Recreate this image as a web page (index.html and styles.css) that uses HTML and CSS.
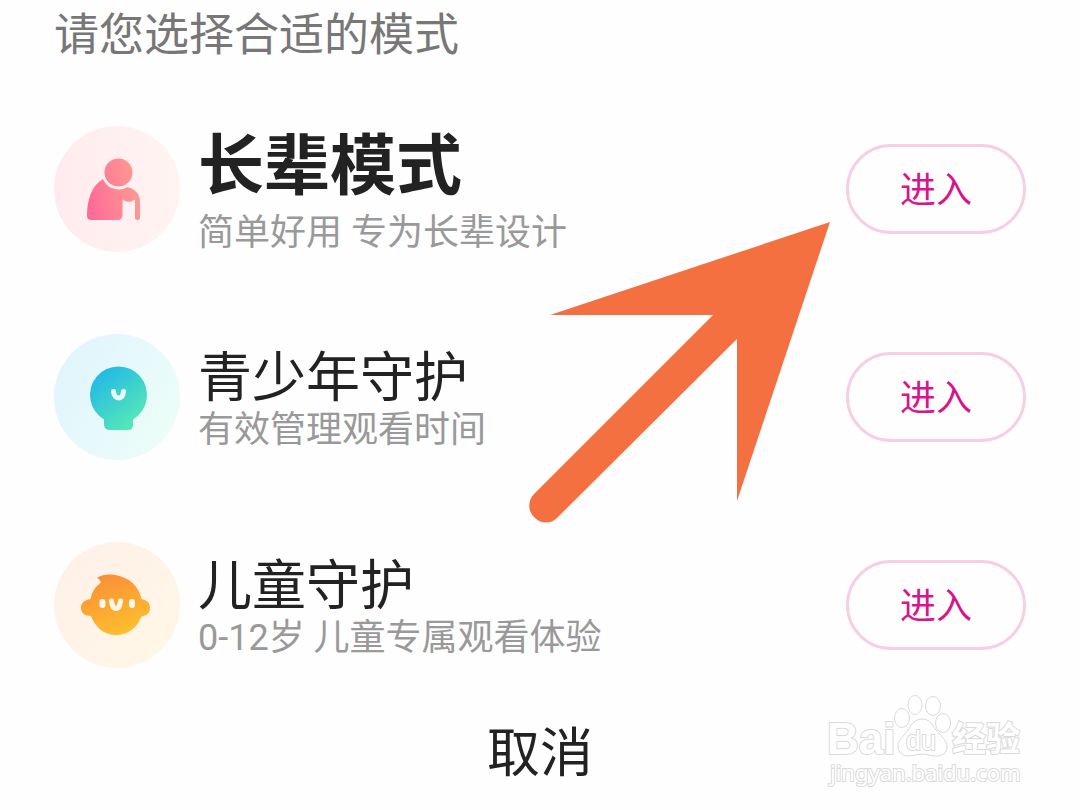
FILE: index.html
```html
<!DOCTYPE html>
<html lang="zh-CN">
<head>
<meta charset="utf-8">
<meta name="viewport" content="width=device-width, initial-scale=1">
<title>模式选择</title>
<link rel="stylesheet" href="styles.css">
</head>
<body>
<main class="sheet">
  <h1 class="heading">请您选择合适的模式</h1>
  <ul class="modes">
    <li class="mode">
      <svg class="avatar" viewBox="0 0 126 126" aria-hidden="true">
        <defs>
          <linearGradient id="pinkBg"><stop offset="0" stop-color="#ffebef"/><stop offset="1" stop-color="#fff4f2"/></linearGradient>
          <linearGradient id="pink" gradientUnits="userSpaceOnUse" x1="33" y1="60" x2="87" y2="50"><stop offset="0" stop-color="#ff6c98"/><stop offset="1" stop-color="#fc9f92"/></linearGradient>
        </defs>
        <circle cx="63" cy="63" r="63" fill="url(#pinkBg)"/>
        <g fill="url(#pink)">
          <circle cx="64.500" cy="46.500" r="14"/>
          <path d="M49 53C52 60 58 63.500 65 63.500C68.500 63.500 71 62.500 73.500 61C81 63 86 68 86 75V91.500Q86 94 83.500 94Q81 94 81 91.500V73.500Q79 74 78 75.500Q73.500 76.500 70 74.500L68.500 73V89Q68.500 94 63.500 94H37Q33 94 33 89.500C33 75 37 60 49 53Z"/>
        </g>
      </svg>
      <div class="copy copy-featured">
        <h2 class="title title-featured">长辈模式</h2>
        <p class="note">简单好用 专为长辈设计</p>
      </div>
      <button class="enter" type="button" aria-label="进入长辈模式">进入</button>
    </li>
    <li class="mode">
      <svg class="avatar" viewBox="0 0 126 126" aria-hidden="true">
        <defs>
          <linearGradient id="blueBg" x1="0" y1="0.200" x2="1" y2="0.800"><stop offset="0" stop-color="#e0f4fd"/><stop offset="1" stop-color="#edfef7"/></linearGradient>
          <linearGradient id="blue" gradientUnits="userSpaceOnUse" x1="44" y1="38" x2="83" y2="85"><stop offset="0" stop-color="#22b8e7"/><stop offset="1" stop-color="#54e6b8"/></linearGradient>
        </defs>
        <circle cx="63" cy="63" r="63" fill="url(#blueBg)"/>
        <path fill="url(#blue)" d="M50 85.500A28.500 28.500 0 1 1 79 85.500V91Q79 96 74 96H56Q50 96 50 90Z"/>
        <path d="M59.500 57.500C60 62 62.500 64 64.500 64C67 64 69 62 69.500 57.500" fill="none" stroke="#e8fbfa" stroke-width="5" stroke-linecap="round"/>
      </svg>
      <div class="copy">
        <h2 class="title">青少年守护</h2>
        <p class="note">有效管理观看时间</p>
      </div>
      <button class="enter" type="button" aria-label="进入青少年守护">进入</button>
    </li>
    <li class="mode">
      <svg class="avatar" viewBox="0 0 126 126" aria-hidden="true">
        <defs>
          <linearGradient id="orangeBg" x1="0" y1="0" x2="1" y2="1"><stop offset="0" stop-color="#fff0e8"/><stop offset="1" stop-color="#fff7e7"/></linearGradient>
          <linearGradient id="orange" gradientUnits="userSpaceOnUse" x1="50" y1="35" x2="72" y2="93"><stop offset="0" stop-color="#fb9136"/><stop offset="1" stop-color="#fdc02d"/></linearGradient>
        </defs>
        <circle cx="63" cy="63" r="63" fill="url(#orangeBg)"/>
        <path fill="url(#orange)" d="M43 36C52 30 65 33 73 37C82 42 86 50 87.500 57C93 58 96 61 96 66C96 71 93 73.500 87.500 74.500C83 86 74 93 62 93C50 93 41 85 37 74C31 74 27 71 27 66C27 61 30 58 36.500 57C38 50 41 45 47 40.500C46 38 45 37 43 36Z"/>
        <g stroke="#fff5e8" stroke-linecap="round" fill="none">
          <path d="M48.500 60V63M78 60V63" stroke-width="6"/>
          <path d="M57.500 59C58 64 60 66.500 62 66.500C64 66.500 66 64 66.500 59" stroke-width="5"/>
        </g>
      </svg>
      <div class="copy">
        <h2 class="title">儿童守护</h2>
        <p class="note">0-12岁 儿童专属观看体验</p>
      </div>
      <button class="enter" type="button" aria-label="进入儿童守护">进入</button>
    </li>
  </ul>
  <button class="cancel" type="button">取消</button>

  <svg class="pointer" viewBox="0 0 301 301" aria-hidden="true">
    <path fill="#f57041" d="M301 0L208 279V117L28 296C22 302 12 302 6 296C-2 289-1 278 5 272L184 93H21Z"/>
  </svg>

  <svg class="watermark" viewBox="0 0 210 100" role="img" aria-label="Baidu 经验 jingyan.baidu.com">
    <g>
      <ellipse cx="82" cy="28" rx="7.500" ry="9.500"/>
      <ellipse cx="95" cy="15" rx="7" ry="9.500"/>
      <ellipse cx="113" cy="16" rx="7.500" ry="9.500"/>
      <ellipse cx="123" cy="33" rx="7.500" ry="9.500"/>
      <path d="M102 29C109 29 112 34 116 40C121 46 127 50 127 57C127 63 122 66 116 66C111 66 107 64 102 64C97 64 93 66 88 66C82 66 78 62 78 56C78 50 84 46 88 40C92 33 96 29 102 29Z"/>
    </g>
    <text class="mark-brand" x="7" y="64">Bai</text>
    <text class="mark-du" x="86" y="60">du</text>
    <text class="mark-cjk" x="132" y="61">经验</text>
    <text class="mark-url" x="10" y="91">jingyan.baidu.com</text>
  </svg>
</main>
</body>
</html>
```
FILE: styles.css
```css
* {
  box-sizing: border-box;
}

body {
  margin: 0;
  background: #fefefe;
  color: #222;
  font-family: "Noto Sans CJK SC", sans-serif;
}

h1, h2, p, ul {
  margin: 0;
  padding: 0;
  font-weight: 400;
}

.sheet {
  position: relative;
  display: flex;
  flex-direction: column;
  padding: 0 54px;
}

.heading {
  color: #777;
  font-size: 45px;
  line-height: 64px;
}

.modes {
  display: grid;
  gap: 56px;
  margin-top: 49px;
  list-style: none;
}

.mode {
  display: flex;
  align-items: center;
  gap: 18px;
  min-height: 152px;
}

.avatar {
  flex: none;
  width: 126px;
  height: 126px;
}

.copy {
  flex: 1;
  min-width: 0;
  padding-top: 6px;
}

.copy-featured {
  padding: 0 0 6px;
}

.title {
  font-size: 54px;
  line-height: 60px;
}

.title-featured {
  font-size: 66px;
  font-weight: 700;
  line-height: 94px;
}

.note {
  color: #999;
  font-family: Roboto, "Noto Sans CJK SC", sans-serif;
  font-size: 36px;
  line-height: 52px;
}

.enter {
  flex: none;
  width: 180px;
  height: 90px;
  padding: 0 0 4px;
  border: 3px solid #f6cfe5;
  border-radius: 45px;
  background: transparent;
  color: #d9148c;
  font: 400 36px "Noto Sans CJK SC", sans-serif;
}

.cancel {
  align-self: center;
  margin-top: 28px;
  padding: 0 24px;
  border: 0;
  background: transparent;
  color: #222;
  font: 400 53px/80px "Noto Sans CJK SC", sans-serif;
}

.pointer {
  position: absolute;
  top: 222px;
  left: 529px;
  width: 301px;
  height: 301px;
  pointer-events: none;
}

.watermark {
  position: absolute;
  top: 690px;
  right: 50px;
  width: 210px;
  height: 100px;
  fill: #fff;
  stroke: #dadada;
  stroke-width: 1px;
  pointer-events: none;
}

.watermark text {
  paint-order: stroke;
  stroke-width: 2px;
}

.mark-brand {
  font: 700 44px "Liberation Sans", sans-serif;
}

.mark-du {
  font: 400 27px "Liberation Sans", sans-serif;
}

.mark-cjk {
  font: 700 34px "Noto Sans CJK SC", sans-serif;
}

.mark-url {
  font: 400 22px "Noto Sans", sans-serif;
}
```
